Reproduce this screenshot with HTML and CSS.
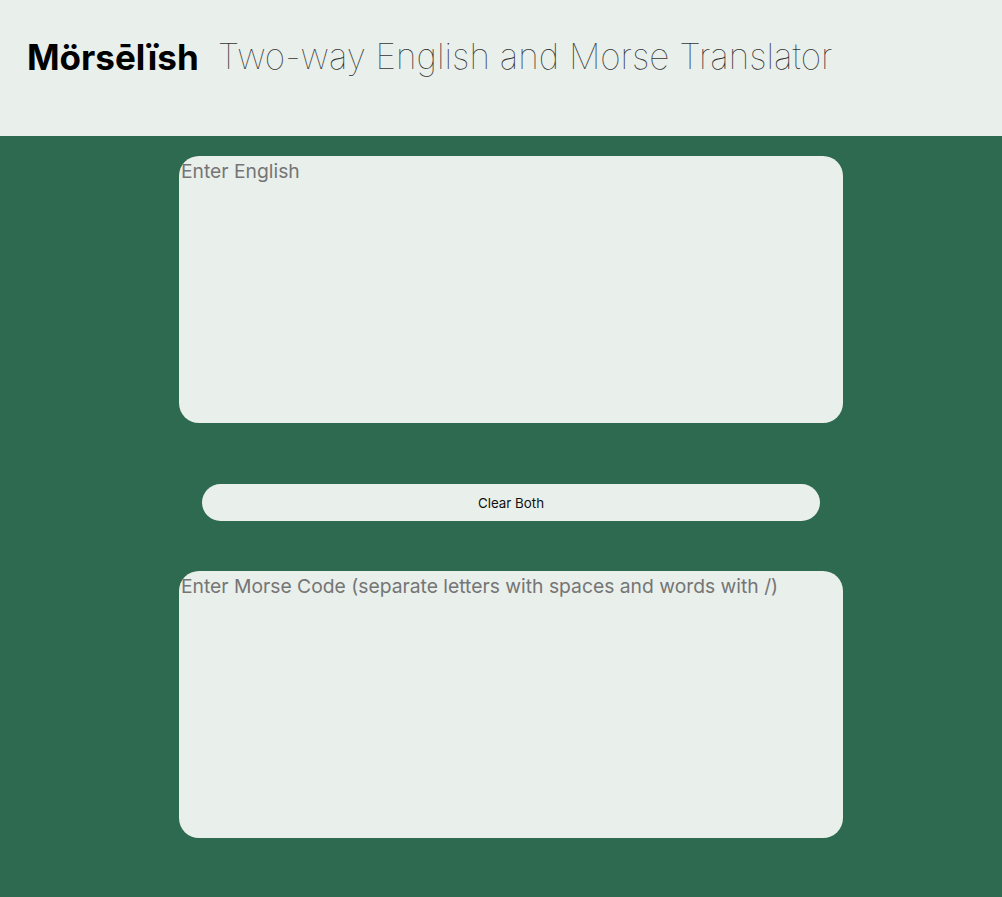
FILE: index.html
```html
<!DOCTYPE html>
<html lang="en">
<head>
<meta charset="utf-8">
<title>Mörsēlïsh</title>
<link rel="stylesheet" href="styles.css">
</head>
<body>
<header class="site-header">
  <h1 class="brand">Mörsēlïsh</h1>
  <p class="tagline">Two-way English and Morse Translator</p>
</header>
<main class="translator">
  <textarea class="box" placeholder="Enter English"></textarea>
  <button class="clear-btn" type="button">Clear Both</button>
  <textarea class="box" placeholder="Enter Morse Code (separate letters with spaces and words with /)"></textarea>
</main>
</body>
</html>
```
FILE: styles.css
```css
html, body {
  margin: 0;
  padding: 0;
}
body {
  font-family: Inter, "Noto Sans", sans-serif;
  background: #2d6a4f;
  min-height: 897px;
}
.site-header {
  background: #e9efeb;
  height: 136px;
  box-sizing: border-box;
  display: flex;
  align-items: center;
  padding-left: 27px;
  padding-bottom: 22px;
  gap: 19px;
}
.brand {
  margin: 0;
  font-size: 35px;
  font-weight: 700;
  color: #000;
  line-height: 1;
}
.tagline {
  margin: 0;
  font-size: 35.1px;
  font-weight: 100;
  color: #333;
  line-height: 1;
}
.translator {
  display: flex;
  flex-direction: column;
  align-items: center;
  padding: 20px 0 60px 20px;
}
.box {
  width: 664px;
  height: 267px;
  box-sizing: border-box;
  border: none;
  border-radius: 20px;
  background: #e9efeb;
  padding: 3px 2px 2px;
  margin: 0;
  font-family: Inter, "Noto Sans", sans-serif;
  font-size: 19.3px;
  color: #222;
  resize: none;
  outline: none;
  display: block;
}
.box::placeholder {
  color: #757575;
}
.clear-btn {
  width: 618px;
  height: 37px;
  margin: 61px 0 50px;
  border: none;
  border-radius: 19px;
  background: #e9efeb;
  font-family: Inter, "Noto Sans", sans-serif;
  font-size: 13.333px;
  color: #111;
  cursor: pointer;
}
```
